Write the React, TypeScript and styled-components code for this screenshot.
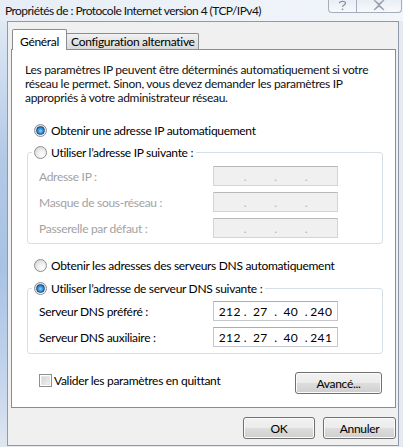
import React from 'react';
import styled, { createGlobalStyle } from 'styled-components';

const GlobalStyle = createGlobalStyle`
  html, body {
    margin: 0;
    padding: 0;
    background: #ffffff;
  }
  body {
    font-family: Lato, 'Liberation Sans', sans-serif;
    font-size: 12px;
    letter-spacing: -0.3px;
    color: #000000;
  }
  * {
    box-sizing: border-box;
  }
`;

// left frame strip is the glassy blue, the right one is plain grey
const Window = styled.div`
  width: 403px;
  height: 447px;
  display: flex;
  flex-direction: column;
  overflow: hidden;
  background:
    linear-gradient(
        to bottom,
        #e8eef6 0%,
        #d4e1f1 12%,
        #b3c9e6 35%,
        #a9c2e4 60%,
        #c4d5ec 85%,
        #dfe6ef 100%
      )
      left top / 7px 100% no-repeat,
    #e6eaef;
`;

const TitleBar = styled.div`
  height: 21px;
  flex: none;
  display: flex;
  align-items: flex-start;
  justify-content: space-between;
  background: linear-gradient(to right, #e6edf6, #eef3f9 60%, #f2f5f9);
`;

const Title = styled.div`
  padding: 3px 0 0 5px;
  font-size: 12px;
  letter-spacing: -0.55px;
  line-height: 15px;
  color: #111111;
  white-space: nowrap;
`;

const CaptionButtons = styled.div`
  display: flex;
  margin-right: 1px;
`;

const CaptionButton = styled.div<{ $w: number }>`
  width: ${({ $w }) => $w}px;
  height: 13px;
  display: flex;
  align-items: flex-start;
  justify-content: center;
  border: 1px solid #a3aebd;
  border-top: none;
  background: linear-gradient(to bottom, #e9eef5, #f7f9fb);
  &:first-child {
    border-radius: 0 0 0 4px;
  }
  &:last-child {
    border-left: none;
    border-radius: 0 0 4px 0;
  }
`;

const Client = styled.div`
  flex: 1;
  margin: 0 4px 1px 7px;
  border: 1px solid #8e9aab;
  background: #f0f0f0;
  display: flex;
  flex-direction: column;
  padding: 7px 2px 6px 3px;
`;

const TabStrip = styled.div`
  display: flex;
  align-items: flex-end;
  padding-left: 1px;
  margin-bottom: -1px;
  position: relative;
  z-index: 1;
`;

const Tab = styled.div<{ $active?: boolean }>`
  border: 1px solid #898c95;
  border-bottom: none;
  border-radius: 2px 2px 0 0;
  white-space: nowrap;
  line-height: 14px;
  height: ${({ $active }) => ($active ? 21 : 16)}px;
  padding: ${({ $active }) => ($active ? '5px 7px 0 7px' : '1px 3px 0 4px')};
  margin-bottom: ${({ $active }) => ($active ? 0 : 1)}px;
  margin-left: ${({ $active }) => ($active ? 0 : -1)}px;
  background: ${({ $active }) =>
    $active ? '#ffffff' : 'linear-gradient(to bottom, #f2f2f2, #e3e3e3 50%, #d9d9d9)'};
`;

const Panel = styled.div`
  background: #ffffff;
  border: 1px solid #898c95;
  padding: 13px 12px 13px 13px;
  display: flex;
  flex-direction: column;
`;

const Intro = styled.p`
  margin: 0;
  line-height: 14px;
  white-space: nowrap;
  color: #111111;
`;

const RadioRow = styled.label<{ $top?: number }>`
  display: flex;
  align-items: center;
  gap: 4px;
  height: 16px;
  padding-left: 9px;
  margin-top: ${({ $top }) => $top || 0}px;
  white-space: nowrap;
`;

const RadioCircle = styled.span<{ $checked?: boolean }>`
  width: 13px;
  height: 13px;
  flex: none;
  border-radius: 50%;
  border: 1px solid #8d8f91;
  background: radial-gradient(circle at 65% 70%, #ffffff 0%, #f1f1f1 35%, #cfcfcf 100%);
  display: flex;
  align-items: center;
  justify-content: center;
  &::after {
    content: '';
    display: ${({ $checked }) => ($checked ? 'block' : 'none')};
    width: 7px;
    height: 7px;
    border-radius: 50%;
    border: 1px solid #1d4c86;
    background: radial-gradient(circle at 50% 55%, #8fdcff 0%, #3a9be0 40%, #0e4a93 100%);
  }
`;

const Group = styled.fieldset<{ $top: number; $bottom: number; $gap: number }>`
  margin: ${({ $top }) => $top}px 0 0 2px;
  border: 1px solid #d5dfe5;
  border-radius: 3px;
  padding: 0 0 ${({ $bottom }) => $bottom}px 0;
  min-width: 0;
  display: flex;
  flex-direction: column;
  gap: 6px;
  & > legend + * {
    margin-top: ${({ $gap }) => $gap}px;
  }
`;

const Legend = styled.legend`
  margin-left: 4px;
  padding: 0 3px 0 0;
  & > label {
    padding-left: 2px;
    background: #ffffff;
  }
`;

const FieldRow = styled.div`
  display: flex;
  align-items: center;
  height: 20px;
  padding-left: 11px;
`;

const FieldLabel = styled.span<{ $disabled?: boolean }>`
  width: 174px;
  flex: none;
  color: ${({ $disabled }) => ($disabled ? '#a2a2a2' : '#000000')};
`;

const IpBox = styled.div<{ $disabled?: boolean }>`
  width: 125px;
  height: 20px;
  display: flex;
  align-items: center;
  padding: 0 2px;
  border: 1px solid ${({ $disabled }) => ($disabled ? '#d4d4d4' : '#c5c9ce')};
  border-top-color: ${({ $disabled }) => ($disabled ? '#b8b8b8' : '#abadb3')};
  background: ${({ $disabled }) => ($disabled ? '#f0f0f0' : '#ffffff')};
  color: ${({ $disabled }) => ($disabled ? '#b0b0b0' : '#000000')};
  font-size: 12px;
`;

const Octet = styled.span`
  flex: 1;
  text-align: center;
  letter-spacing: 0.4px;
`;

const Dot = styled.span`
  width: 3px;
  text-align: center;
`;

const PanelFooter = styled.div`
  display: flex;
  justify-content: space-between;
  align-items: flex-start;
  margin: 18px 1px 0 2px;
  padding-left: 12px;
`;

const CheckRow = styled.label`
  display: flex;
  align-items: center;
  gap: 2px;
  height: 16px;
`;

const CheckBox = styled.span`
  width: 13px;
  height: 13px;
  flex: none;
  border: 1px solid #8f8f8f;
  background: linear-gradient(135deg, #cdcdcd, #f6f6f6);
  box-shadow: inset 0 0 0 1px #ffffff, inset 0 0 0 2px #e6e6e6;
`;

const Button = styled.button<{ $w: number }>`
  width: ${({ $w }) => $w}px;
  height: 22px;
  padding: 0;
  font-family: inherit;
  font-size: 12px;
  letter-spacing: inherit;
  color: #000000;
  border: 1px solid #707070;
  border-radius: 3px;
  background: linear-gradient(to bottom, #f2f2f2 0%, #ebebeb 50%, #dddddd 51%, #cfcfcf 100%);
  box-shadow: inset 0 0 0 1px #fbfbfb;
`;

const DialogFooter = styled.div`
  display: flex;
  justify-content: flex-end;
  gap: 8px;
  margin-top: 9px;
`;

type IpProps = { value?: string[]; disabled?: boolean };

const IpField = ({ value, disabled }: IpProps) => {
  const parts = value || ['', '', '', ''];
  return (
    <IpBox $disabled={disabled}>
      {parts.map((p, i) => (
        <React.Fragment key={i}>
          {i > 0 && <Dot>.</Dot>}
          <Octet>{p}</Octet>
        </React.Fragment>
      ))}
    </IpBox>
  );
};

const HelpGlyph = () => (
  <svg width="9" height="11" viewBox="0 0 9 11">
    <path
      d="M1.5 3.2 C1.5 0.8 7.5 0.6 7.5 3.2 C7.5 5 4.5 5 4.5 7"
      fill="none"
      stroke="#8a93a1"
      strokeWidth="1.3"
    />
    <circle cx="4.5" cy="9.3" r="0.9" fill="#8a93a1" />
  </svg>
);

const CloseGlyph = () => (
  <svg width="14" height="11" viewBox="0 0 14 11">
    <path
      d="M2 0 L7 4 L12 0 M2 10 L7 6 L12 10 M2 0 L12 10 M12 0 L2 10"
      fill="none"
      stroke="#98a1ae"
      strokeWidth="1.1"
    />
  </svg>
);

export default function App() {
  return (
    <>
      <GlobalStyle />
      <Window>
        <TitleBar>
          <Title>Propriétés de : Protocole Internet version 4 (TCP/IPv4)</Title>
          <CaptionButtons>
            <CaptionButton $w={29}>
              <HelpGlyph />
            </CaptionButton>
            <CaptionButton $w={45}>
              <CloseGlyph />
            </CaptionButton>
          </CaptionButtons>
        </TitleBar>
        <Client>
          <TabStrip>
            <Tab $active>Général</Tab>
            <Tab>Configuration alternative</Tab>
          </TabStrip>
          <Panel>
            <Intro>
              Les paramètres IP peuvent être déterminés automatiquement si votre
              <br />
              réseau le permet. Sinon, vous devez demander les paramètres IP
              <br />
              appropriés à votre administrateur réseau.
            </Intro>

            <RadioRow $top={17}>
              <RadioCircle $checked />
              Obtenir une adresse IP automatiquement
            </RadioRow>

            <Group $top={6} $bottom={5} $gap={6}>
              <Legend>
                <RadioRow>
                  <RadioCircle />
                  Utiliser l’adresse IP suivante :
                </RadioRow>
              </Legend>
              <FieldRow>
                <FieldLabel $disabled>Adresse IP :</FieldLabel>
                <IpField disabled />
              </FieldRow>
              <FieldRow>
                <FieldLabel $disabled>Masque de sous-réseau :</FieldLabel>
                <IpField disabled />
              </FieldRow>
              <FieldRow>
                <FieldLabel $disabled>Passerelle par défaut :</FieldLabel>
                <IpField disabled />
              </FieldRow>
            </Group>

            <RadioRow $top={13}>
              <RadioCircle />
              Obtenir les adresses des serveurs DNS automatiquement
            </RadioRow>

            <Group $top={7} $bottom={6} $gap={5}>
              <Legend>
                <RadioRow>
                  <RadioCircle $checked />
                  Utiliser l’adresse de serveur DNS suivante :
                </RadioRow>
              </Legend>
              <FieldRow>
                <FieldLabel>Serveur DNS préféré :</FieldLabel>
                <IpField value={['212', '27', '40', '240']} />
              </FieldRow>
              <FieldRow>
                <FieldLabel>Serveur DNS auxiliaire :</FieldLabel>
                <IpField value={['212', '27', '40', '241']} />
              </FieldRow>
            </Group>

            <PanelFooter>
              <CheckRow>
                <CheckBox />
                Valider les paramètres en quittant
              </CheckRow>
              <Button $w={87}>Avancé...</Button>
            </PanelFooter>
          </Panel>
          <DialogFooter>
            <Button $w={72}>OK</Button>
            <Button $w={73}>Annuler</Button>
          </DialogFooter>
        </Client>
      </Window>
    </>
  );
}
